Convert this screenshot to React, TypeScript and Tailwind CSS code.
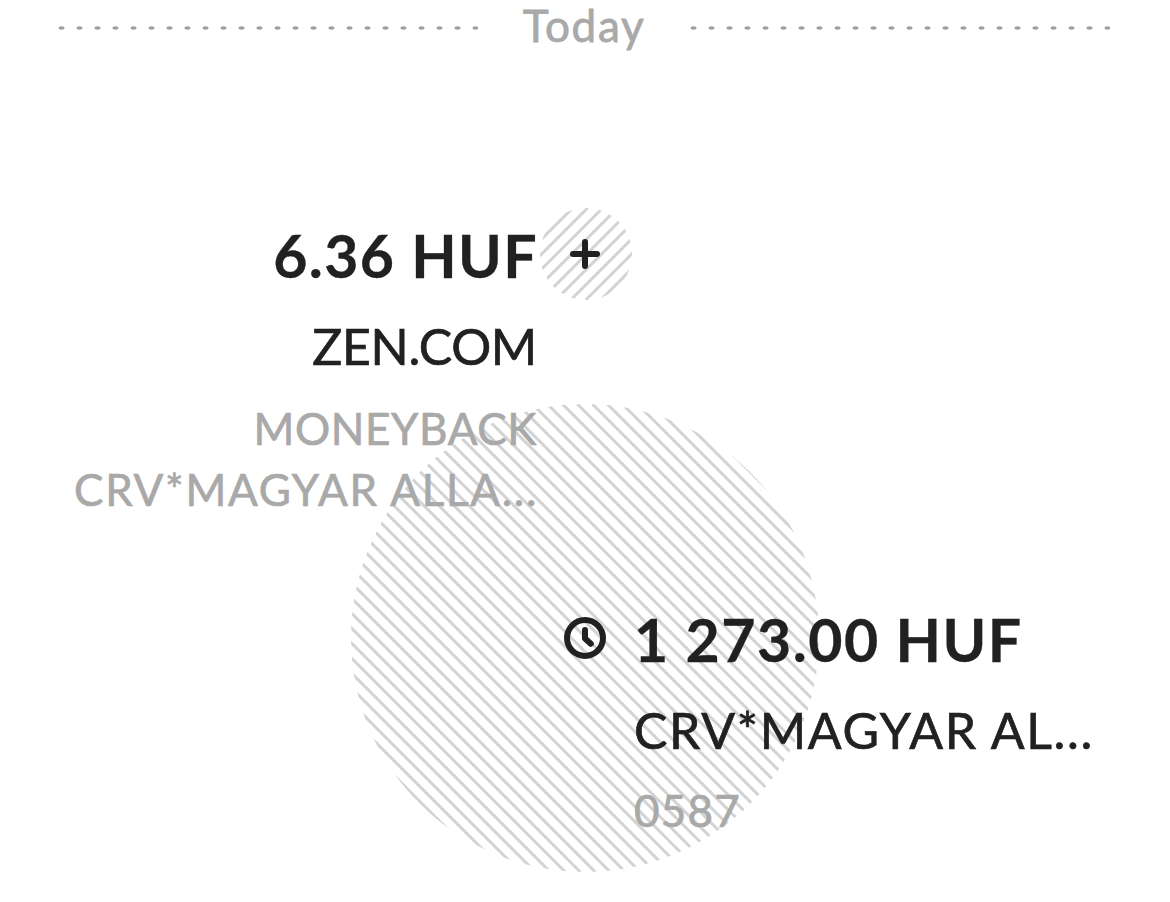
import React from 'react';

interface DottedRuleProps {
  count?: number;
}

// Row of small oval dots on either side of the date
const DottedRule: React.FC<DottedRuleProps> = ({ count = 24 }) => (
  <svg className="mt-[5px] h-1 w-[420px]" viewBox="0 0 420 4" aria-hidden="true">
    {Array.from({ length: count }, (_, index) => (
      <ellipse key={index} cx={3.5 + index * 18} cy="2" rx="3" ry="1.7" fill="#a0a0a0" />
    ))}
  </svg>
);

interface HatchedCircleProps {
  id: string;
  size: number;
  offset: number;
  rising?: boolean;
  className?: string;
}

// Circle filled with diagonal lines, 15px apart along the x axis
const HatchedCircle: React.FC<HatchedCircleProps> = ({ id, size, offset, rising = false, className = '' }) => {
  const lines = Array.from({ length: Math.ceil((size * 2) / 15) + 2 }, (_, index) => {
    const start = offset + index * 15;
    return rising ? `M${start} 0L${start - size} ${size}` : `M${start - size} 0L${start} ${size}`;
  });

  return (
    <svg className={className} viewBox={`0 0 ${size} ${size}`} aria-hidden="true">
      <clipPath id={id}>
        <circle cx={size / 2} cy={size / 2} r={size / 2} />
      </clipPath>
      <path d={lines.join('')} stroke="#d3d3d3" strokeWidth="3" clipPath={`url(#${id})`} />
    </svg>
  );
};

const PlusIcon: React.FC = () => (
  <svg className="absolute top-[31px] left-[30px] size-[30px]" viewBox="0 0 30 30" aria-hidden="true">
    <path d="M15 3V27M3 15H27" stroke="#212121" strokeWidth="6" strokeLinecap="round" />
  </svg>
);

const ClockIcon: React.FC = () => (
  <svg className="size-[42px]" viewBox="0 0 42 42" fill="none" aria-hidden="true">
    <circle cx="21" cy="21" r="18" stroke="#212121" strokeWidth="6" />
    <path d="M21 13V21.5L26.8 26.8" stroke="#212121" strokeWidth="6" strokeLinecap="round" strokeLinejoin="round" />
  </svg>
);

const App: React.FC = () => {
  return (
    <main className="relative isolate h-[902px] w-[1170px] overflow-hidden bg-white font-['Lato',sans-serif] text-[#212121]">
      <HatchedCircle
        id="pending-hatch"
        size={468}
        offset={4.3}
        className="absolute top-[404px] left-[351px] -z-10 size-[468px]"
      />

      <header className="flex h-[50px] items-center justify-between pr-[60px] pl-[58px]">
        <DottedRule />
        <h1 className="text-[44px] leading-[50px] tracking-[1.7px] text-[#a9a9a9] [-webkit-text-stroke:0.8px_#a9a9a9]">Today</h1>
        <DottedRule />
      </header>

      {/* Incoming */}
      <section className="mt-[158px] flex">
        <div className="flex w-[538px] flex-col items-end pt-0.5 whitespace-nowrap">
          <p className="text-[59px] leading-[92px] font-bold tracking-[1.4px] [-webkit-text-stroke:0.3px_#212121]">6.36 HUF</p>
          <p className="mt-3.5 pr-px text-[50px] leading-[60px] tracking-[-0.3px] [-webkit-text-stroke:0.7px_#212121]">ZEN.COM</p>
          <div className="mt-[22px] text-right text-[44px] leading-[61px] text-[#a9a9a9] [-webkit-text-stroke:0.7px_#a9a9a9]">
            <p className="pr-px tracking-[0.6px]">MONEYBACK</p>
            <p className="tracking-[1.7px]">CRV*MAGYAR ALLA...</p>
          </div>
        </div>
        <div className="relative ml-[2px] size-[92px]">
          <HatchedCircle id="income-hatch" size={92} offset={2.7} rising className="size-[92px]" />
          <PlusIcon />
        </div>
      </section>

      {/* Outgoing, still pending */}
      <section className="mt-[72px] flex pl-[564px]">
        <div className="flex h-[92px] items-center">
          <ClockIcon />
        </div>
        <div className="ml-7 pt-0.5 whitespace-nowrap">
          <p className="text-[59px] leading-[92px] font-bold tracking-[1.5px] [-webkit-text-stroke:0.3px_#212121]">1 273.00 HUF</p>
          <p className="mt-3.5 text-[50px] leading-[60px] tracking-[1.7px] [-webkit-text-stroke:0.7px_#212121]">CRV*MAGYAR AL...</p>
          <p className="mt-5 text-[44px] leading-[61px] tracking-[1.2px] text-[#a9a9a9] [-webkit-text-stroke:0.7px_#a9a9a9]">0587</p>
        </div>
      </section>
    </main>
  );
};

export default App;
